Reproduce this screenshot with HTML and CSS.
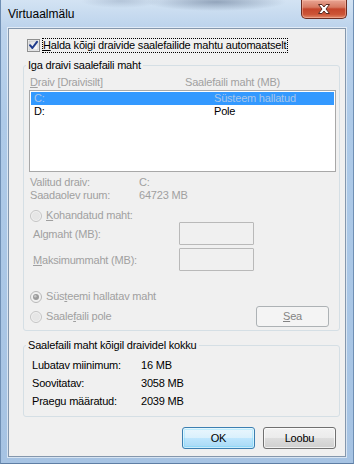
FILE: index.html
```html
<!DOCTYPE html>
<html lang="et">
<head>
<meta charset="utf-8">
<title>Virtuaalmälu</title>
<link rel="stylesheet" href="styles.css">
</head>
<body>
<div class="window">
  <div class="titlebar">
    <span class="title">Virtuaalmälu</span>
    <div class="close">
      <svg width="16" height="12" viewBox="0 0 16 12">
        <path d="M2.5 1.5 L6 1.5 L8 4 L10 1.5 L13.5 1.5 L10 6 L13.5 10.5 L10 10.5 L8 8 L6 10.5 L2.5 10.5 L6 6 Z" fill="#ffffff" stroke="#5a2b22" stroke-width="1" stroke-linejoin="round"/>
      </svg>
    </div>
  </div>
  <div class="client">
    <div class="auto-row">
      <span class="checkbox">
        <svg width="13" height="13" viewBox="0 0 13 13">
          <defs>
            <linearGradient id="cbg" x1="0" y1="0" x2="1" y2="1">
              <stop offset="0" stop-color="#dcdcdc"/>
              <stop offset="1" stop-color="#ffffff"/>
            </linearGradient>
          </defs>
          <rect x="0.5" y="0.5" width="12" height="12" fill="#f4f4f4" stroke="#8e8f8f"/>
          <rect x="2" y="2" width="9" height="9" fill="url(#cbg)" stroke="#b5b9be" stroke-width="0.6"/>
          <path d="M3 6.2 L5.4 9 L10 2.8" fill="none" stroke="#1f3b8c" stroke-width="2" stroke-linecap="round" stroke-linejoin="round"/>
        </svg>
      </span>
      <span class="focus"><u>H</u>alda kõigi draivide saalefailide mahtu automaatselt</span>
    </div>

    <fieldset class="group g1">
      <legend>Iga draivi saalefaili maht</legend>
      <div class="cols dim"><span class="hc1"><u>D</u>raiv [Draivisilt]</span><span>Saalefaili maht (MB)</span></div>
      <div class="list">
        <div class="item sel"><span class="ic1">C:</span><span>Süsteem hallatud</span></div>
        <div class="item"><span class="ic1">D:</span><span>Pole</span></div>
      </div>
      <div class="info dim">
        <div class="irow"><span class="ilabel">Valitud draiv:</span><span>C:</span></div>
        <div class="irow"><span class="ilabel">Saadaolev ruum:</span><span>64723 MB</span></div>
      </div>
      <div class="radio-row r-custom dim">
        <span class="radio">
          <svg width="12" height="12" viewBox="0 0 12 12"><circle cx="6" cy="6" r="5.5" fill="#f1f1f1" stroke="#c4c4c4"/><circle cx="6" cy="6" r="4" fill="#e6e6e6"/></svg>
        </span>
        <span><u>K</u>ohandatud maht:</span>
      </div>
      <div class="field-row f-init dim">
        <span class="flabel">Al<u>g</u>maht (MB):</span>
        <span class="textbox"></span>
      </div>
      <div class="field-row f-max dim">
        <span class="flabel"><u>M</u>aksimummaht (MB):</span>
        <span class="textbox"></span>
      </div>
      <div class="radio-row r-sys dim">
        <span class="radio">
          <svg width="12" height="12" viewBox="0 0 12 12"><circle cx="6" cy="6" r="5.5" fill="#f1f1f1" stroke="#b8b8b8"/><circle cx="6" cy="6" r="3" fill="#9c9c9c"/><circle cx="5.3" cy="5.3" r="1.2" fill="#c8c8c8"/></svg>
        </span>
        <span>Süs<u>t</u>eemi hallatav maht</span>
      </div>
      <div class="pole-row dim">
        <div class="radio-row">
          <span class="radio">
            <svg width="12" height="12" viewBox="0 0 12 12"><circle cx="6" cy="6" r="5.5" fill="#f1f1f1" stroke="#c4c4c4"/><circle cx="6" cy="6" r="4" fill="#e6e6e6"/></svg>
          </span>
          <span>Saale<u>f</u>aili pole</span>
        </div>
        <span class="btn btn-disabled"><u>S</u>ea</span>
      </div>
    </fieldset>

    <fieldset class="group g2">
      <legend>Saalefaili maht kõigil draividel kokku</legend>
      <div class="trow"><span class="tlabel">Lubatav miinimum:</span><span>16 MB</span></div>
      <div class="trow"><span class="tlabel">Soovitatav:</span><span>3058 MB</span></div>
      <div class="trow"><span class="tlabel">Praegu määratud:</span><span>2039 MB</span></div>
    </fieldset>

    <div class="buttons">
      <span class="btn btn-default">OK</span>
      <span class="btn">Loobu</span>
    </div>
  </div>
</div>
</body>
</html>
```

FILE: styles.css
```css
* { box-sizing: border-box; }

html, body {
  margin: 0;
  padding: 0;
  background: #aac6e5;
}

body {
  font-family: "Liberation Sans", Arial, sans-serif;
  font-size: 11px;
  letter-spacing: -0.2px;
  color: #000;
}

.window {
  width: 354px;
  height: 464px;
  display: flex;
  flex-direction: column;
  padding: 0 7px 6px 7px;
  background:
    radial-gradient(ellipse 70px 9px at 215px 2px, rgba(70, 90, 120, 0.45), rgba(70, 90, 120, 0) 100%),
    radial-gradient(ellipse 40px 7px at 120px 1px, rgba(90, 110, 140, 0.25), rgba(90, 110, 140, 0) 100%),
    linear-gradient(to bottom, #d3e3f3 0, #bcd3ec 28px, #aecae8 120px, #a6c3e3 100%);
  border-left: 1px solid #6f8fb4;
  border-right: 1px solid #6f8fb4;
  border-bottom: 1px solid #5e7ea4;
}

.titlebar {
  height: 28px;
  display: flex;
  align-items: flex-start;
  flex: none;
}

.title {
  font-family: "Liberation Sans", Arial, sans-serif;
  font-size: 12px;
  letter-spacing: 0;
  line-height: 15px;
  padding-top: 7px;
  padding-left: 0;
  color: #000;
}

.close {
  margin-left: auto;
  margin-right: -1px;
  width: 46px;
  height: 19px;
  border: 1px solid #6d2d22;
  border-top: none;
  border-radius: 0 0 5px 5px;
  background: linear-gradient(to bottom, #e8a493 0, #d77a62 40%, #c4452b 50%, #cc5537 80%, #e18a6c 100%);
  box-shadow: inset 0 0 0 1px rgba(255, 200, 180, 0.45);
  display: flex;
  align-items: center;
  justify-content: center;
}

.client {
  flex: 1;
  background: #f0f0f0;
  border: 1px solid #8497ad;
  box-shadow: 0 0 0 1px rgba(255, 255, 255, 0.55);
  display: flex;
  flex-direction: column;
}

.auto-row {
  margin-top: 9px;
  padding-left: 18px;
  display: flex;
  align-items: center;
  height: 15px;
}

.checkbox {
  width: 13px;
  height: 13px;
  display: block;
  margin-right: 2px;
}
.checkbox svg { display: block; }

.focus {
  border: 1px dotted #000;
  line-height: 13px;
  padding: 0 1px 0 0;
}

u { text-decoration: underline; text-underline-offset: 1px; }

.group {
  margin: 0 0 0 14px;
  width: 317px;
  border: 1px solid #d5dfe5;
  border-radius: 3px;
  padding: 0 3px 3px 5px;
  min-width: 0;
}

.group legend {
  line-height: 13px;
  padding: 0 2px;
  margin-left: -3px;
}

.g1 { margin-top: 6px; }

.dim { color: #a0a0a0; }

.cols {
  margin-top: 4px;
  line-height: 13px;
  display: flex;
  padding-left: 1px;
}
.hc1 { width: 155px; }

.list {
  margin-top: 1px;
  width: 307px;
  height: 82px;
  border: 1px solid #a8a8a8;
  background: #fff;
  padding: 1px 1px;
}

.item {
  height: 13px;
  line-height: 13px;
  display: flex;
  padding-left: 3px;
  color: #000;
}
.item.sel {
  background: #3399ff;
  color: #a9c6ea;
}
.ic1 { width: 180px; }

.info { margin-top: 4px; }
.irow { line-height: 13px; display: flex; padding-left: 1px; }
.ilabel { width: 109px; }

.radio-row {
  display: flex;
  align-items: center;
  line-height: 13px;
  height: 13px;
  padding-left: 1px;
}
.radio {
  width: 12px;
  height: 12px;
  margin-right: 4px;
  display: block;
}
.radio svg { display: block; }

.r-custom { margin-top: 7px; }

.field-row {
  display: flex;
  align-items: center;
  height: 23px;
  padding-left: 4px;
}
.f-max { margin-top: 3px; }
.flabel { width: 146px; }
.textbox {
  width: 75px;
  height: 23px;
  border: 1px solid #b9b9b9;
  border-radius: 1px;
  background: #f0f0f0;
}

.r-sys { margin-top: 19px; }

.pole-row {
  margin-top: 3px;
  display: flex;
  align-items: center;
  justify-content: space-between;
  height: 21px;
  padding-right: 7px;
}

.btn {
  display: flex;
  align-items: center;
  justify-content: center;
  width: 73px;
  height: 22px;
  border: 1px solid #707070;
  border-radius: 3px;
  background: linear-gradient(to bottom, #f2f2f2 0, #ebebeb 50%, #dddddd 51%, #cfcfcf 100%);
  box-shadow: inset 0 0 0 1px rgba(255, 255, 255, 0.7);
  color: #000;
  line-height: 13px;
}

.btn-disabled {
  height: 21px;
  border-color: #adb2b5;
  background: #f4f4f4;
  color: #838383;
  box-shadow: none;
}

.btn-default {
  border-color: #3c7fb1;
  background: linear-gradient(to bottom, #eaf6fd 0, #d9f0fc 50%, #bee6fd 51%, #a7d9f5 100%);
  box-shadow: inset 0 0 0 1px rgba(255, 255, 255, 0.55), inset 0 0 0 2px rgba(72, 210, 255, 0.25);
}

.g2 {
  margin-top: 8px;
  padding-bottom: 6px;
}

.trow {
  margin-top: 0;
  height: 18px;
  line-height: 18px;
  display: flex;
  padding-left: 3px;
}
.trow:first-of-type { margin-top: 4px; }
.tlabel { width: 109px; }

.buttons {
  margin-top: 10px;
  display: flex;
  justify-content: flex-end;
  gap: 8px;
  padding-right: 9px;
}
```
